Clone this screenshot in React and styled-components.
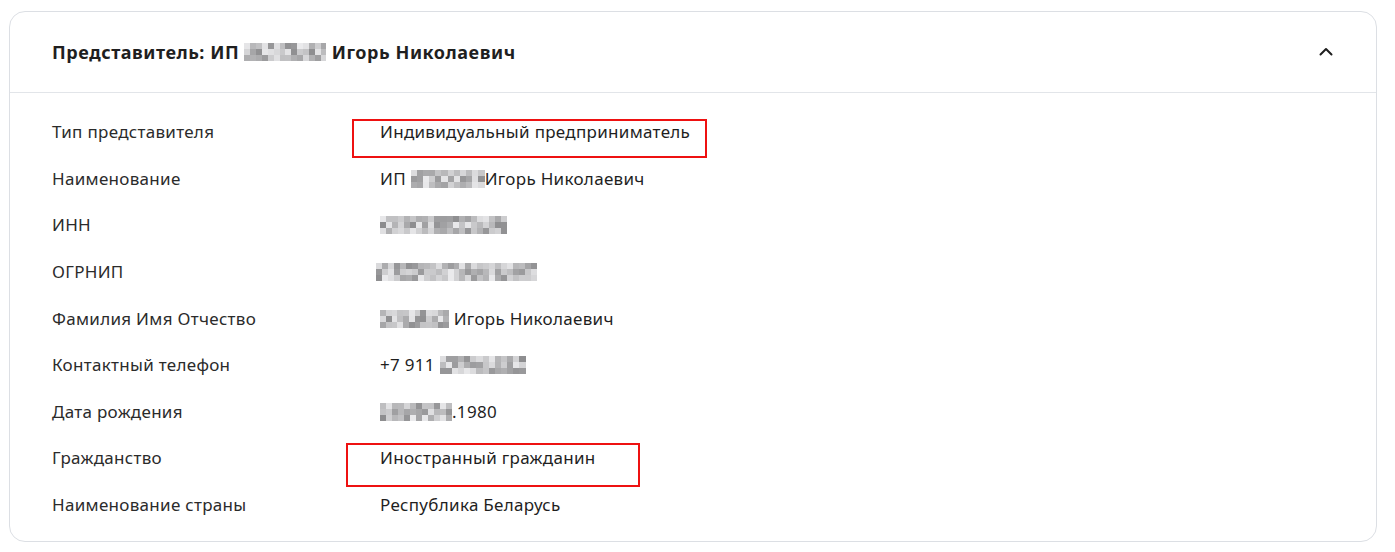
import React from "react";
import styled, { createGlobalStyle } from "styled-components";

const GlobalStyle = createGlobalStyle`
  html, body {
    margin: 0;
    padding: 0;
    background: #ffffff;
  }
  body {
    font-family: "Noto Sans", "Open Sans", Arial, sans-serif;
    color: #222222;
    -webkit-font-smoothing: antialiased;
  }
`;

// deterministic grey mosaic standing in for blurred personal data
const shadeFor = (seed, i) => {
  const x = Math.sin(seed * 97.13 + i * 12.9898) * 43758.5453;
  const r = x - Math.floor(x);
  return Math.round(140 + r * 95);
};

const Mosaic = ({ width, seed = 1, rows = 3 }) => {
  const cols = Math.max(1, Math.round(width / 6));
  const cells = [];
  for (let i = 0; i < cols * rows; i++) {
    const v = shadeFor(seed, i);
    cells.push(<MosaicCell key={i} style={{ background: `rgb(${v},${v},${v + 2})` }} />);
  }
  return (
    <MosaicBox $cols={cols} $rows={rows} style={{ width }}>
      {cells}
    </MosaicBox>
  );
};

const rows = [
  { label: "Тип представителя", value: <>Индивидуальный предприниматель</> },
  {
    label: "Наименование",
    value: (
      <>
        ИП <Mosaic width={74} seed={3} />
        Игорь Николаевич
      </>
    ),
  },
  { label: "ИНН", value: <Mosaic width={127} seed={5} /> },
  { label: "ОГРНИП", value: <Mosaic width={161} seed={7} />, shift: true },
  {
    label: "Фамилия Имя Отчество",
    value: (
      <>
        <Mosaic width={69} seed={9} /> Игорь Николаевич
      </>
    ),
  },
  {
    label: "Контактный телефон",
    value: (
      <>
        +7 911 <Mosaic width={86} seed={11} />
      </>
    ),
  },
  {
    label: "Дата рождения",
    value: (
      <>
        <Mosaic width={72} seed={13} />
        .1980
      </>
    ),
  },
  { label: "Гражданство", value: <>Иностранный гражданин</> },
  { label: "Наименование страны", value: <>Республика Беларусь</> },
];

const App = () => {
  return (
    <>
      <GlobalStyle />
      <Page>
        <Card>
          <Header>
            <Title>
              Представитель: ИП <Mosaic width={82} seed={2} /> Игорь Николаевич
            </Title>
            <Toggle aria-label="Свернуть">
              <svg width="16" height="16" viewBox="0 0 16 16" fill="none">
                <path
                  d="M2.5 10.5L8 5l5.5 5.5"
                  stroke="#1f1f1f"
                  strokeWidth="2"
                  strokeLinecap="round"
                  strokeLinejoin="round"
                />
              </svg>
            </Toggle>
          </Header>
          <Body>
            {rows.map((r) => (
              <Row key={r.label}>
                <Label>{r.label}</Label>
                <Value $shift={r.shift}>{r.value}</Value>
              </Row>
            ))}
          </Body>
          <Highlight $left={342} $top={107} $width={355} $height={39} />
          <Highlight $left={336} $top={431} $width={294} $height={44} />
        </Card>
      </Page>
    </>
  );
};

export default App;

// Styled Components
const Page = styled.div`
  padding: 11px 18px 10px 9px;
`;

const Card = styled.section`
  position: relative;
  box-sizing: border-box;
  width: 1368px;
  height: 531px;
  border: 1px solid #dcdfe4;
  border-radius: 16px;
  background: #ffffff;
`;

const Header = styled.div`
  display: flex;
  align-items: center;
  justify-content: space-between;
  box-sizing: border-box;
  height: 81px;
  padding: 0 38px 0 42px;
  border-bottom: 1px solid #e2e5e9;
`;

const Title = styled.h3`
  margin: 0;
  font-size: 18px;
  font-weight: 700;
  letter-spacing: 0.55px;
  color: #1f1f1f;
  display: flex;
  align-items: center;
  white-space: pre;
`;

const Toggle = styled.button`
  display: flex;
  align-items: center;
  justify-content: center;
  width: 24px;
  height: 24px;
  padding: 0;
  border: none;
  background: none;
  cursor: pointer;
`;

const Body = styled.div`
  padding: 16px 0 14px 42px;
`;

const Row = styled.div`
  display: grid;
  grid-template-columns: 328px 1fr;
  align-items: center;
  height: 46.6px;
  font-size: 17px;
  letter-spacing: 0.3px;
  line-height: 22px;
`;

const Label = styled.div`
  color: #2b2b2b;
`;

const Value = styled.div`
  display: flex;
  align-items: center;
  white-space: pre;
  color: #1f1f1f;
  margin-left: ${(p) => (p.$shift ? "-4px" : "0")};
`;

const MosaicBox = styled.span`
  display: inline-grid;
  grid-template-columns: repeat(${(p) => p.$cols}, 1fr);
  grid-template-rows: repeat(${(p) => p.$rows}, 6px);
  flex: none;
`;

const MosaicCell = styled.span`
  display: block;
`;

const Highlight = styled.div`
  position: absolute;
  left: ${(p) => p.$left}px;
  top: ${(p) => p.$top}px;
  width: ${(p) => p.$width}px;
  height: ${(p) => p.$height}px;
  box-sizing: border-box;
  border: 2px solid #ee1111;
  pointer-events: none;
`;
